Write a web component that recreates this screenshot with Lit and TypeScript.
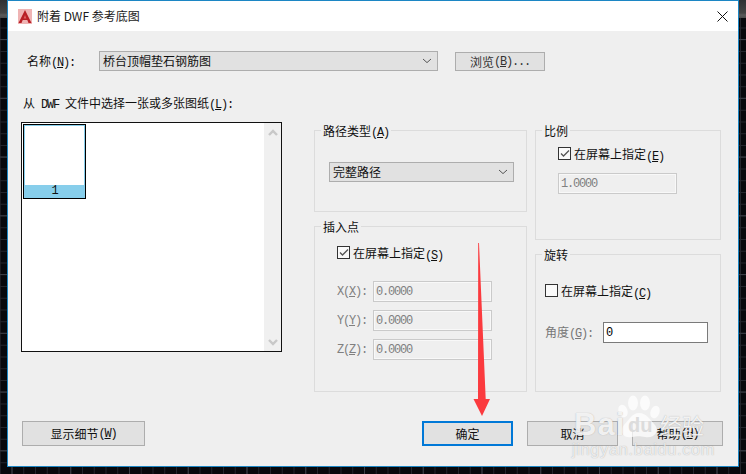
import { LitElement, html, css, svg } from "lit";
import { customElement } from "lit/decorators.js";

const chevron = html`<svg class="chev" width="10" height="6" viewBox="0 0 10 6"><path d="M1 1 L5 4.6 L9 1" fill="none" stroke="#555" stroke-width="1"/></svg>`;

const key = (cjk: string, k: string, tail = "") =>
  html`${cjk}<span class="lat">(<u>${k}</u>)${tail}</span>`;

@customElement("app-root")
export class AppRoot extends LitElement {
  static styles = css`
    :host {
      display: block;
      position: relative;
      width: 746px;
      height: 474px;
      overflow: hidden;
      font: 12px/14px "Noto Sans CJK SC", sans-serif;
      color: #111;
      background-color: #07080c;
      background-image:
        linear-gradient(to right, #3a3d45 1px, transparent 1px),
        linear-gradient(to bottom, #3a3d45 1px, transparent 1px),
        linear-gradient(to right, #23252c 1px, transparent 1px),
        linear-gradient(to bottom, #23252c 1px, transparent 1px);
      background-size: 58.75px 58.75px, 58.75px 58.75px, 11.75px 11.75px, 11.75px 11.75px;
      background-position: 11.5px 0, 0 39px, 11.5px 0, 0 4px;
    }
    .strip { position: absolute; top: 0; height: 18px; width: 8px; background: linear-gradient(#2f3033 0, #444 13px, #5a5a5a 15px, #4a4a4a 18px); }
    .strip.l { left: 0; }
    .strip.r { right: 0; }
    .dialog {
      position: absolute;
      left: 7px;
      top: 0;
      width: 732px;
      height: 467px;
      box-sizing: border-box;
      border: 1px solid #1c86c4;
      background: #efefef;
    }
    .title {
      height: 30px;
      background: #fff;
      display: flex;
      align-items: center;
      padding-left: 10px;
      gap: 5px;
      color: #1a1a1a;
    }
    .title .close { margin-left: auto; margin-right: 10px; display: block; }
    .lat { font: 12px/14px "Liberation Mono", monospace; letter-spacing: -1.2px; white-space: pre; }
    u { text-underline-offset: 1px; }

    .row1 { display: flex; align-items: flex-start; margin-top: 20px; padding-left: 19px; }
    .row1 .lab { width: 72px; line-height: 20px; }
    .combo {
      box-sizing: border-box;
      height: 20px;
      background: #e1e1e1;
      border: 1px solid #adadad;
      display: flex;
      align-items: center;
      padding: 0 3px;
      justify-content: space-between;
    }
    .chev { margin-right: 2px; flex: none; }
    .name { width: 339px; }
    .btn {
      box-sizing: border-box;
      background: #e1e1e1;
      border: 1px solid #adadad;
      display: flex;
      align-items: center;
      justify-content: center;
      height: 25px;
      width: 91px;
    }
    .browse { width: 90px; height: 19px; margin: 1px 0 0 17px; color: #333; }

    .main { display: flex; margin-top: 25px; }
    .left { margin-left: 13px; width: 261px; }
    .left .cap { height: 26px; padding-left: 2px; line-height: 14px; }
    .list {
      box-sizing: border-box;
      height: 230px;
      border: 1px solid #111;
      background: #fff;
      display: flex;
      justify-content: space-between;
      padding-left: 1px;
    }
    .thumb {
      box-sizing: border-box;
      width: 63px;
      height: 75px;
      margin-top: 1px;
      border: 1px solid #000;
      display: flex;
      flex-direction: column;
      background: #87ceeb;
      padding: 1px 1px 0;
    }
    .thumb .pg { height: 59px; background: #fff; }
    .thumb .no { flex: 1; text-align: center; line-height: 13px; }
    .track {
      width: 17px;
      background: #f0f0f0;
      display: flex;
      flex-direction: column;
      justify-content: space-between;
      align-items: center;
      padding: 6px 0 5px;
    }
    .track svg { display: block; }

    .right { display: grid; grid-template-columns: 213px 186px; gap: 0 8px; margin: 34px 0 0 32px; }
    .col { display: flex; flex-direction: column; gap: 14px; }
    .group {
      position: relative;
      box-sizing: border-box;
      border: 1px solid #dcdcdc;
    }
    .legend {
      position: absolute;
      top: -7px;
      left: 6px;
      padding: 0 2px;
      background: #efefef;
      line-height: 14px;
    }
    .g-path { height: 82px; padding: 31px 0 0 14px; }
    .g-path .combo { width: 185px; }
    .g-ins { height: 166px; padding: 19px 0 0 22px; }
    .g-scale { height: 110px; padding: 16px 0 0 22px; }
    .g-rot { height: 138px; padding: 29px 0 0 9px; }

    .check { display: flex; align-items: center; gap: 3px; height: 13px; }
    .check span { position: relative; top: 1px; }
    .box { box-sizing: border-box; width: 13px; height: 13px; border: 1px solid #333; background: #fafafa; flex: none; }
    .box svg { display: block; }

    .dis {
      box-sizing: border-box;
      width: 119px;
      height: 21px;
      border: 1px solid #cacaca;
      box-shadow: inset 0 0 0 1px #f8f8f8;
      background: #efefef;
      color: #808080;
      padding-left: 2px;
      display: flex;
      align-items: center;
    }
    .g-scale .dis { margin-top: 13px; }
    .xyz { display: flex; flex-direction: column; gap: 8px; margin-top: 22px; }
    .xyz > div { display: flex; align-items: center; color: #808080; }
    .xyz .l { width: 36px; }
    .ang { display: flex; align-items: center; margin-top: 25px; color: #777; }
    .ang .l { width: 58px; }
    .ang .val {
      box-sizing: border-box;
      width: 105px;
      height: 21px;
      border: 1px solid #7a7a7a;
      background: #fff;
      color: #000;
      padding-left: 2px;
      display: flex;
      align-items: center;
    }

    .btns { display: flex; margin-top: 29px; padding-left: 14px; gap: 14px; }
    .detail { width: 123px; margin-right: 263px; }
    .ok { border: 2px solid #0078d7; }

    .wm { position: absolute; left: 0; top: 0; pointer-events: none; display: block; }
    .wmtext { position: absolute; color: rgba(255, 255, 255, 0.85); pointer-events: none; white-space: nowrap; text-shadow: 0 0 1px rgba(110, 110, 110, 0.55); }
    .bai { left: 574px; top: 409px; font: 700 31px/32px "Liberation Sans", sans-serif; letter-spacing: 1px; }
    .du { left: 628px; top: 414px; font: 700 20px/22px "Liberation Sans", sans-serif; color: #dcdcdc; text-shadow: none; }
    .jy { left: 660px; top: 411px; font: 22px/26px "Noto Sans CJK SC", sans-serif; }
    .url { left: 572px; top: 440px; font: 16.5px/18px "Liberation Sans", sans-serif; letter-spacing: 0.6px; color: rgba(255, 255, 255, 0.75); }
    .arrow { position: absolute; left: 0; top: 0; pointer-events: none; display: block; }
  `;

  private check(on: boolean, label: unknown) {
    return html`<div class="check">
      <div class="box">${on
        ? html`<svg width="11" height="11" viewBox="0 0 11 11"><path d="M2 5.5 L4.5 8 L10 2.5" fill="none" stroke="#555" stroke-width="1.3"/></svg>`
        : ""}</div>
      <span>${label}</span>
    </div>`;
  }

  render() {
    return html`
      <div class="strip l"></div>
      <div class="strip r"></div>
      <div class="dialog">
        <div class="title">
          <svg width="14" height="15" viewBox="0 0 14 15">
            <rect width="14" height="15" fill="#efb4b4"/>
            <path d="M7 1 L13.5 14 L10.5 14 L9.3 11 L4.7 11 L3.5 14 L0.5 14 Z" fill="#b81f26"/>
            <path d="M7 6 L8.4 9.5 L5.6 9.5 Z" fill="#e06060"/>
          </svg>
          <span>附着 DWF 参考底图</span>
          <svg class="close" width="11" height="11" viewBox="0 0 11 11"><path d="M0.5 0.5 L10.5 10.5 M10.5 0.5 L0.5 10.5" stroke="#111" stroke-width="1"/></svg>
        </div>

        <div class="row1">
          <div class="lab">${key("名称", "N", ":")}</div>
          <div class="combo name"><span>桥台顶帽垫石钢筋图</span>${chevron}</div>
          <div class="btn browse">${key("浏览", "B", "...")}</div>
        </div>

        <div class="main">
          <div class="left">
            <div class="cap">从<span class="lat"> DWF </span>文件中选择一张或多张图纸<span class="lat">(<u>L</u>):</span></div>
            <div class="list">
              <div class="thumb"><div class="pg"></div><div class="no lat">1</div></div>
              <div class="track">
                <svg width="10" height="7" viewBox="0 0 10 7"><path d="M1 6 L5 2 L9 6" fill="none" stroke="#c8c8c8" stroke-width="2.4"/></svg>
                <svg width="10" height="7" viewBox="0 0 10 7"><path d="M1 1 L5 5 L9 1" fill="none" stroke="#c8c8c8" stroke-width="2.4"/></svg>
              </div>
            </div>
          </div>

          <div class="right">
            <div class="col">
              <div class="group g-path">
                <div class="legend">${key("路径类型", "A")}</div>
                <div class="combo"><span>完整路径</span>${chevron}</div>
              </div>
              <div class="group g-ins">
                <div class="legend">插入点</div>
                ${this.check(true, key("在屏幕上指定", "S"))}
                <div class="xyz">
                  <div><span class="l lat">X(<u>X</u>):</span><div class="dis lat">0.0000</div></div>
                  <div><span class="l lat">Y(<u>Y</u>):</span><div class="dis lat">0.0000</div></div>
                  <div><span class="l lat">Z(<u>Z</u>):</span><div class="dis lat">0.0000</div></div>
                </div>
              </div>
            </div>
            <div class="col">
              <div class="group g-scale">
                <div class="legend">比例</div>
                ${this.check(true, key("在屏幕上指定", "E"))}
                <div class="dis lat">1.0000</div>
              </div>
              <div class="group g-rot">
                <div class="legend">旋转</div>
                ${this.check(false, key("在屏幕上指定", "C"))}
                <div class="ang">
                  <span class="l">${key("角度", "G", ":")}</span>
                  <div class="val lat">0</div>
                </div>
              </div>
            </div>
          </div>
        </div>

        <div class="btns">
          <div class="btn detail">${key("显示细节", "W")}</div>
          <div class="btn ok">确定</div>
          <div class="btn">取消</div>
          <div class="btn">${key("帮助", "H")}</div>
        </div>
      </div>

      <svg class="wm" width="746" height="474" viewBox="0 0 746 474">
        <g fill="rgba(255,255,255,0.72)">
          ${svg`<ellipse cx="623" cy="411" rx="4.5" ry="6.5" transform="rotate(-20 623 411)"/>
          <ellipse cx="633" cy="403" rx="5" ry="7.5"/>
          <ellipse cx="645" cy="403" rx="5" ry="7.5"/>
          <ellipse cx="655" cy="412" rx="4.5" ry="6.5" transform="rotate(20 655 412)"/>
          <path d="M639 413 C647 413 650 420 655 425 C660 431 654 439 645 437 C640 436 637 436 632 437 C623 439 619 431 624 425 C629 420 632 413 639 413 Z"/>`}
        </g>
      </svg>
      <div class="wmtext bai">Bai</div>
      <div class="wmtext du">du</div>
      <div class="wmtext jy">经验</div>
      <div class="wmtext url">jingyan.baidu.com</div>

      <svg class="arrow" width="746" height="474" viewBox="0 0 746 474">
        <polygon points="478.2,243 479,243 485.7,399 490,399 482,416 473.5,399 478,399" fill="#fb3a3e"/>
      </svg>
    `;
  }
}
